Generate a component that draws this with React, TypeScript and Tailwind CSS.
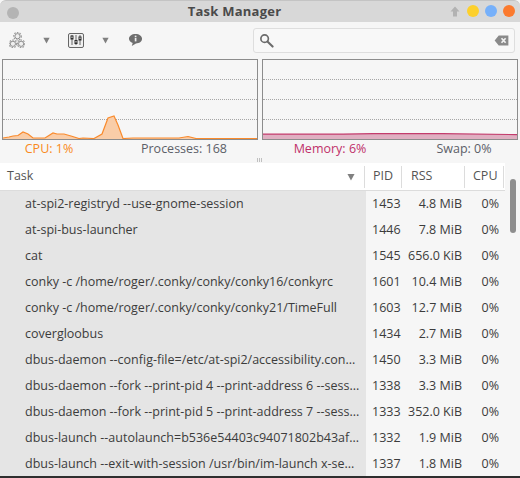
const font = "font-['Open_Sans',sans-serif]";

const tasks = [
  ["at-spi2-registryd --use-gnome-session", "1453", "4.8 MiB"],
  ["at-spi-bus-launcher", "1446", "7.8 MiB"],
  ["cat", "1545", "656.0 KiB"],
  ["conky -c /home/roger/.conky/conky/conky16/conkyrc", "1601", "10.4 MiB"],
  ["conky -c /home/roger/.conky/conky/conky21/TimeFull", "1603", "12.7 MiB"],
  ["covergloobus", "1434", "2.7 MiB"],
  ["dbus-daemon --config-file=/etc/at-spi2/accessibility.con...", "1450", "3.3 MiB"],
  ["dbus-daemon --fork --print-pid 4 --print-address 6 --sess...", "1338", "3.3 MiB"],
  ["dbus-daemon --fork --print-pid 5 --print-address 7 --sess...", "1333", "352.0 KiB"],
  ["dbus-launch --autolaunch=b536e54403c94071802b43af...", "1332", "1.9 MiB"],
  ["dbus-launch --exit-with-session /usr/bin/im-launch x-se...", "1337", "1.8 MiB"],
];

function Gear({ x, y }: { x: number; y: number }) {
  return (
    <g>
      <circle cx={x} cy={y} r="3.8" fill="none" stroke="#9a9a9a" strokeWidth="1.2" strokeDasharray="1.6 1.2" />
      <circle cx={x} cy={y} r="2.6" fill="#efefef" stroke="#8e8e8e" strokeWidth="1" />
    </g>
  );
}

function Caret({ size }: { size: number }) {
  return (
    <svg width={size} height={size} viewBox="0 0 9 9">
      <path d="M0.5 1H8.5L4.5 8.5Z" fill="#808080" />
    </svg>
  );
}

function Graph({ children }: { children: React.ReactNode }) {
  return (
    <div className="relative h-[81px] w-[256px] border border-[#8c8c8c] bg-[#f6f6f6]">
      <div className="absolute inset-x-0 top-[19px] border-t border-dotted border-[#a6a6a6]" />
      <div className="absolute inset-x-0 top-[39px] border-t border-dotted border-[#a6a6a6]" />
      <div className="absolute inset-x-0 top-[59px] border-t border-dotted border-[#a6a6a6]" />
      <svg className="absolute inset-0" width="254" height="79" viewBox="0 0 254 79">
        {children}
      </svg>
    </div>
  );
}

const cpuLine =
  "0,78 6,77 10,76 15,75.5 20,72 25,74 30,78 42,78 50,73 54,74 61,74 68,76 76,78.5 80,78 91,78.5 99,74 105,58 111,56 115,65 120,78.5 130,78 158,78 176,78 185,76.5 193,78.5 254,78.5";

export default function App() {
  return (
    <div className={`${font} relative h-[478px] w-[520px] overflow-hidden bg-[#f6f6f6] text-[12.5px] text-[#3c3c3c]`}>
      <div className="flex h-[22px] items-center justify-between rounded-t-[6px] border-t border-[#c4c4c4] bg-[#d8d8d8] pl-[7px] pr-[5px]">
        <div className="mt-[3px] h-[12px] w-[12px] rounded-full bg-[#b4b4b4]" />
        <div className="text-[13px] font-bold tracking-[0.25px] text-[#4a4a4a]">Task Manager</div>
        <div className="mb-[1px] flex items-center gap-[6px]">
          <svg className="mr-[1px]" width="10" height="11" viewBox="0 0 10 11">
            <path d="M5 0.5L9.5 5.5H7V10.5H3V5.5H0.5Z" fill="#b2b2b2" />
          </svg>
          <div className="h-[12px] w-[12px] rounded-full bg-[#fdd02c]" />
          <div className="h-[12px] w-[12px] rounded-full bg-[#76b0fa]" />
          <div className="h-[12px] w-[12px] rounded-full bg-[#fb7a2e]" />
        </div>
      </div>

      <div className="flex h-[36px] items-center pl-[9px] pr-[5px]">
        <svg width="16" height="16" viewBox="0 0 16 16">
          <Gear x={8.5} y={4.2} />
          <Gear x={3.9} y={11.8} />
          <Gear x={12.1} y={11.8} />
        </svg>
        <div className="ml-[18px]"><Caret size={7} /></div>
        <div className="ml-[18px] flex h-[15px] w-[16px] items-center justify-center rounded-[2px] border border-[#666] bg-[#f0f0f0]">
          <svg width="12" height="10" viewBox="0 0 12 10">
            <path d="M2 0V10M6 0V10M10 0V10" stroke="#666" strokeWidth="1" />
            <rect x="0.5" y="0.5" width="3" height="4" fill="#2e2e2e" />
            <rect x="4.5" y="5" width="3" height="4" fill="#2e2e2e" />
            <rect x="8.5" y="1.5" width="3" height="4" fill="#2e2e2e" />
            <rect x="1.5" y="1.5" width="1" height="1.5" fill="#eee" />
            <rect x="5.5" y="6" width="1" height="1.5" fill="#eee" />
            <rect x="9.5" y="2.5" width="1" height="1.5" fill="#eee" />
          </svg>
        </div>
        <div className="ml-[18px]"><Caret size={7} /></div>
        <svg className="ml-[19px]" width="15" height="14" viewBox="0 0 16 15">
          <path d="M8 1C12 1 15 3.2 15 6.2C15 9.2 12 11.2 8.5 11.2L4 14L5 10.6C2.6 9.8 1 8.2 1 6.2C1 3.2 4 1 8 1Z" fill="#6e6e6e" />
          <rect x="7.2" y="2.8" width="1.8" height="1.6" fill="#eee" />
          <rect x="7.2" y="5.2" width="1.8" height="3.8" fill="#eee" />
        </svg>
        <div className="ml-auto flex h-[25px] w-[262px] items-center justify-between rounded-[3px] border border-[#dedede] bg-[#f8f8f8] pl-[5px] pr-[5px]">
          <svg width="15" height="15" viewBox="0 0 16 16">
            <circle cx="6" cy="6" r="4" fill="none" stroke="#6b6b6b" strokeWidth="1.8" />
            <path d="M9 9L14.5 14.5" stroke="#6b6b6b" strokeWidth="2.2" strokeLinecap="round" />
          </svg>
          <svg width="15" height="11" viewBox="0 0 16 12">
            <path d="M5 0.5H15.5V11.5H5L0.5 6Z" fill="#8a8a8a" />
            <path d="M8 3.5L12.5 8.5M12.5 3.5L8 8.5" stroke="#f2f2f2" strokeWidth="1.8" />
          </svg>
        </div>
      </div>

      <div className="flex justify-between px-[2px] pt-[1px]">
        <Graph>
          <polygon points={`0,79 ${cpuLine} 254,79`} fill="#f9cda8" />
          <polyline points={cpuLine} fill="none" stroke="#f98a2c" strokeWidth="1.2" />
        </Graph>
        <Graph>
          <rect x="0" y="74" width="254" height="5" fill="#dfafc1" />
          <polyline points="0,74.2 80,74.2 110,73.6 180,73.6 254,74.6" fill="none" stroke="#c33c6c" strokeWidth="1.2" />
        </Graph>
      </div>

      <div className="flex h-[18px] items-center">
        <div className="grid w-[260px] grid-cols-2 text-center">
          <span className="pr-[32px] text-[#f98a20]">CPU: 1%</span>
          <span className="pr-[22px] text-[#5c6068]">Processes: 168</span>
        </div>
        <div className="grid w-[260px] grid-cols-2 text-center">
          <span className="pl-[10px] text-[#c0306a]">Memory: 6%</span>
          <span className="pl-[18px] text-[#5c6068]">Swap: 0%</span>
        </div>
      </div>

      <div className="flex h-[5px] justify-center gap-[1px] pr-[2px]">
        <div className="h-[4px] w-[1px] bg-[#c0c0c0]" />
        <div className="h-[4px] w-[1px] bg-[#c0c0c0]" />
        <div className="h-[4px] w-[1px] bg-[#c0c0c0]" />
      </div>

      <div className="flex h-[28px] w-[505px] items-center border-b border-[#dcdcdc] bg-white text-[#555]">
        <div className="flex h-[22px] w-[365px] items-center justify-between border-r border-[#dcdcdc] pl-[7px] pr-[9px]">
          <span>Task</span>
          <Caret size={8} />
        </div>
        <div className="flex h-[22px] w-[37px] items-center border-r border-[#dcdcdc] pl-[8px]">PID</div>
        <div className="flex h-[22px] w-[63px] items-center border-r border-[#dcdcdc] pl-[9px]">RSS</div>
        <div className="flex h-[22px] w-[39px] items-center border-r border-[#dcdcdc] pl-[8px]">CPU</div>
      </div>

      <div className="w-[505px]">
        {tasks.map((t) => (
          <div key={t[1]} className="flex h-[26px] items-center">
            <div className="flex h-full w-[366px] items-center whitespace-nowrap bg-[#e5e5e5] pl-[25px]">{t[0]}</div>
            <div className="w-[36px] pl-[6px]">{t[1]}</div>
            <div className="w-[60px] text-right">{t[2]}</div>
            <div className="w-[37px] text-right">0%</div>
          </div>
        ))}
      </div>

      <div className="absolute left-[510px] top-[179px] h-[54px] w-[6px] rounded-[3px] bg-[#8e8e8e]" />
      <div className="absolute inset-x-0 bottom-0 h-[2px] bg-[#2e2e2e]" />
    </div>
  );
}
